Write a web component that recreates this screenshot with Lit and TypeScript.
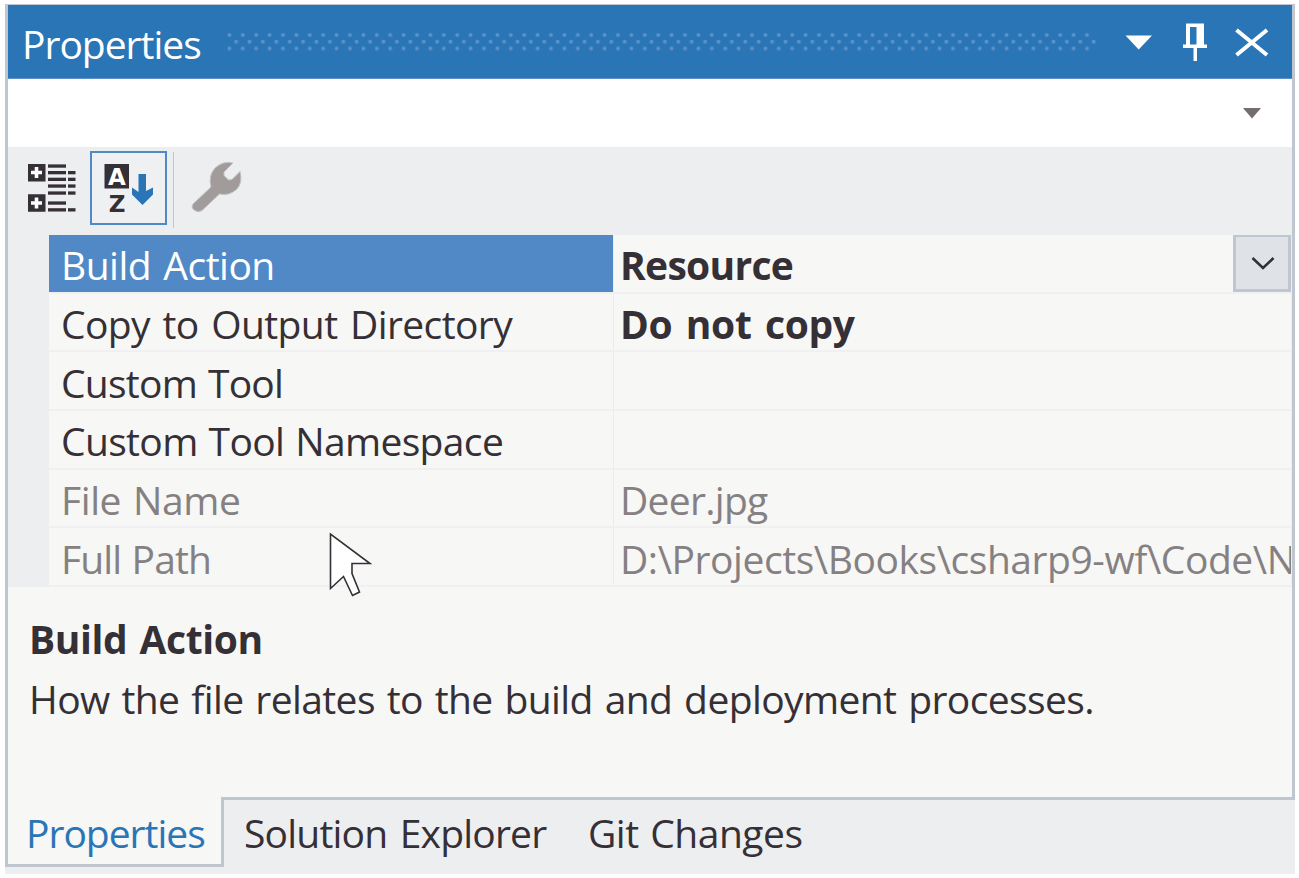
import { LitElement, html, css, svg } from "lit";
import { customElement, property, state } from "lit/decorators.js";
import { classMap } from "lit/directives/class-map.js";

interface Row {
  name: string;
  value: string;
  readonly?: boolean;
  /** letter and word spacing of the name, in px */
  fit: [number, number];
  /** letter and word spacing of the value, in px */
  valueFit?: [number, number];
}

const ROWS: Row[] = [
  { name: "Build Action", value: "Resource", fit: [-0.5, 2.5], valueFit: [-0.7, 0] },
  { name: "Copy to Output Directory", value: "Do not copy", fit: [-0.6, 3], valueFit: [-0.3, 3.5] },
  { name: "Custom Tool", value: "", fit: [-0.75, 1.5] },
  { name: "Custom Tool Namespace", value: "", fit: [-0.65, 1.5] },
  { name: "File Name", value: "Deer.jpg", readonly: true, fit: [-0.4, 2.2], valueFit: [-0.7, 0] },
  {
    name: "Full Path",
    value: "D:\\Projects\\Books\\csharp9-wf\\Code\\N",
    readonly: true,
    fit: [-0.9, 1.2],
    valueFit: [-0.44, 0],
  },
];

const spacing = ([l, w]: [number, number] = [0, 0]) => `letter-spacing:${l}px;word-spacing:${w}px`;

@customElement("title-bar")
export class TitleBar extends LitElement {
  @property() label = "";

  static styles = css`
    :host {
      display: flex;
      align-items: center;
      height: 73px;
      flex: none;
      background: #2975b6;
      border-bottom: 1px solid #5b90c8;
      color: #fff;
      padding: 0 22px 0 14px;
    }
    .label {
      width: 205px;
      flex: none;
      white-space: nowrap;
      line-height: 54px;
      margin-top: 5px;
      letter-spacing: -1px;
    }
    .grip {
      width: 870px;
      height: 18px;
      flex: none;
      margin-top: 1px;
    }
    .buttons {
      margin-left: auto;
      width: 146px;
      height: 40px;
      flex: none;
    }
  `;

  render() {
    return html`
      <span class="label">${this.label}</span>
      <svg class="grip" viewBox="0 0 870 18">
        <defs>
          <pattern id="dots" width="13.4" height="14" patternUnits="userSpaceOnUse">
            <circle cx="2.4" cy="2" r="2" fill="#5b90c8" />
            <circle cx="9.1" cy="8.8" r="2" fill="#5b90c8" />
          </pattern>
          <pattern id="tail" width="13.4" height="4" patternUnits="userSpaceOnUse" y="13.5">
            <circle cx="2.4" cy="2" r="2" fill="#5b90c8" />
          </pattern>
        </defs>
        <rect width="870" height="13" fill="url(#dots)" />
        <rect y="13.5" width="870" height="4" fill="url(#tail)" />
      </svg>
      <svg class="buttons" viewBox="0 0 146 40" fill="#fff">
        <path d="M1.500 13.500H28L14.700 27.500Z" />
        <path
          d="M62 1.500H80V22.500H83V26H73V39H69.500V26H59V22.500H62ZM66 5V22.500H72.500V5Z"
          fill-rule="evenodd" />
        <path d="M112.500 8L143 33M143 8L112.500 33" stroke="#fff" stroke-width="4" />
      </svg>
    `;
  }
}

@customElement("tool-strip")
export class ToolStrip extends LitElement {
  static styles = css`
    :host {
      display: flex;
      flex: none;
      height: 88px;
      box-sizing: border-box;
      padding-top: 4px;
      padding-left: 3px;
      background: #edeef0;
    }
    .tool {
      box-sizing: border-box;
      height: 74px;
      width: 79px;
    }
    .tool.sorted {
      width: 77px;
      border: 2px solid #4f8ac6;
      background: #eff0f2;
    }
    .rule {
      width: 1px;
      height: 76px;
      margin: 1px 0 0 6px;
      background: #c0c6d0;
    }
    .tool svg {
      display: block;
      width: 100%;
      height: 100%;
    }
    .glyph {
      font: bold 23px "DejaVu Sans", Verdana, sans-serif;
    }
  `;

  render() {
    const lines: number[][] = [
      [37, 14, 18], [37, 20.6, 18], [37, 27.3, 18], [37, 34, 18], [37, 41, 18], [37, 51, 18], [37, 57.8, 18],
      [57, 20.6, 7.5], [57, 27.3, 7.5], [57, 34, 7.5], [57, 41, 7.5], [57, 57.8, 7.5],
    ];
    return html`
      <div class="tool">
        <svg viewBox="0 0 79 74">
          <path d="M17 13h17.500v17.500H17ZM17 43.300h17.500v17.500H17Z" fill="#352f36" />
          <path d="M20 21.500h11M25.500 16v11M20 52h11M25.500 46.500v11" stroke="#fff" stroke-width="3.600" />
          ${lines.map(([x, y, w]) => svg`<rect x=${x} y=${y - 0.6} width=${w} height="3.300" fill="#352f36" />`)}
        </svg>
      </div>
      <div class="tool sorted">
        <svg viewBox="0 0 73 70">
          <rect x="12.500" y="11" width="24.500" height="24.500" fill="#352f36" />
          <text class="glyph" x="15.900" y="31.500" fill="#fff">A</text>
          <text class="glyph" x="16.700" y="58.500" fill="#352f36">Z</text>
          <path d="M46.500 21H54V38L61 34.500V41.500L50.500 52L40 41.500V34.500L46.500 39Z" fill="#2975b6" />
        </svg>
      </div>
      <div class="rule"></div>
      <div class="tool">
        <svg viewBox="0 0 79 74">
          <path
            d="M19 53L37 36Q34 25 41 17Q49 9.500 59 12L50 21V24.500L54.500 29L58 28.500L66 20.500Q69 32 62.500 38.500Q55 45 45.500 43L28 59.500Q24 62 21 59.500Q16.500 57 19 53Z"
            fill="#a19b9b" stroke="#c3c2c6" stroke-width="1" />
        </svg>
      </div>
    `;
  }
}

@customElement("property-grid")
export class PropertyGrid extends LitElement {
  @property({ attribute: false }) rows: Row[] = [];
  @property({ type: Number }) selected = 0;

  static styles = css`
    :host {
      display: grid;
      grid-template-rows: repeat(6, 1fr);
      height: 352px;
      flex: none;
      margin-left: 41px;
      margin-right: 1px;
    }
    .row {
      display: grid;
      grid-template-columns: 565px 1fr;
      min-width: 0;
      min-height: 0;
      border-bottom: 2px solid #f0f0f3;
      box-sizing: border-box;
    }
    .name,
    .value {
      display: flex;
      align-items: center;
      min-width: 0;
      overflow: hidden;
      white-space: nowrap;
      line-height: 54px;
      padding-top: 4px;
    }
    .name {
      padding-left: 12px;
      border-right: 1px solid #ececf0;
    }
    .value {
      padding-left: 6px;
      font-weight: bold;
    }
    .readonly {
      color: #858082;
    }
    .readonly .value {
      font-weight: normal;
    }
    .selected .name {
      background: #5089c6;
      background-clip: padding-box;
      color: #fff;
    }
    .drop {
      box-sizing: border-box;
      width: 58px;
      height: 58px;
      margin: -4px 0 0 auto;
      border: 3px solid #c0c6d0;
      background: #dfe2e7;
      flex: none;
    }
  `;

  render() {
    return this.rows.map(
      (r, i) => html`
        <div class=${classMap({ row: true, readonly: !!r.readonly, selected: i === this.selected })}>
          <div class="name"><span style=${spacing(r.fit)}>${r.name}</span></div>
          <div class="value">
            <span style=${spacing(r.valueFit)}>${r.value}</span>
            ${i === this.selected
              ? html`<svg class="drop" viewBox="0 0 52 52">
                  <path d="M16.500 21L27 31L37.500 21" fill="none" stroke="#352f36" stroke-width="2.600" />
                </svg>`
              : ""}
          </div>
        </div>
      `
    );
  }
}

@customElement("app-root")
export class AppRoot extends LitElement {
  @state() private selected = 0;

  static styles = css`
    :host {
      display: block;
      position: relative;
      width: 1299px;
      height: 878px;
      box-sizing: border-box;
      padding: 4px 4px 4px 5px;
      background: #fff;
      color: #352f36;
      font: 39px "Open Sans", "Noto Sans", sans-serif;
      overflow: hidden;
    }
    .window {
      display: flex;
      flex-direction: column;
      height: 793px;
      box-sizing: border-box;
      border: 3px solid #c0c6d0;
      border-top-width: 1px;
      border-bottom: none;
      background: #edeef0;
    }
    .combo {
      flex: none;
      height: 68px;
      background: #fff;
      display: flex;
      justify-content: flex-end;
      align-items: center;
      padding-right: 31px;
    }
    .description {
      flex: 1;
      background: #f7f7f5;
      padding: 25px 21px 0;
    }
    .heading,
    .text {
      margin: 0;
      font-size: inherit;
      white-space: nowrap;
      line-height: 54px;
    }
    .heading {
      font-weight: bold;
      letter-spacing: -0.4px;
      word-spacing: 2.5px;
    }
    .text {
      margin-top: 6px;
      letter-spacing: -0.6px;
      word-spacing: 2.3px;
    }
    property-grid {
      background: #f7f7f5;
    }
    .tabs {
      display: flex;
      height: 77px;
      background: #edeef0;
    }
    .tab {
      box-sizing: border-box;
      flex: none;
      line-height: 54px;
      white-space: nowrap;
    }
    .tab.active {
      width: 216px;
      height: 70px;
      padding-top: 9px;
      padding-left: 18px;
      background: #f7f7f5;
      color: #2975b6;
      letter-spacing: -1px;
      border: 3px solid #c0c6d0;
      border-top: none;
      border-right: none;
    }
    .rest {
      flex: 1;
      display: flex;
      border-top: 3px solid #c0c6d0;
    }
    .edge {
      width: 3px;
      height: 67px;
      background: #c0c6d0;
    }
    .rest .tab {
      padding-top: 6px;
    }
    .second {
      width: 344px;
      padding-left: 20px;
      letter-spacing: -0.8px;
      word-spacing: 3px;
    }
    .third {
      padding-left: 20px;
      letter-spacing: -0.5px;
      word-spacing: 2px;
    }
    .cursor {
      position: absolute;
      left: 327px;
      top: 530px;
    }
  `;

  render() {
    return html`
      <div class="window">
        <title-bar label="Properties"></title-bar>
        <div class="combo">
          <svg width="18" height="11" viewBox="0 0 18 11"><path d="M0 0H18L9 10.500Z" fill="#736d70" /></svg>
        </div>
        <tool-strip></tool-strip>
        <property-grid .rows=${ROWS} .selected=${this.selected}></property-grid>
        <div class="description">
          <h2 class="heading">Build Action</h2>
          <p class="text">How the file relates to the build and deployment processes.</p>
        </div>
      </div>
      <div class="tabs">
        <div class="tab active">Properties</div>
        <div class="rest">
          <div class="edge"></div>
          <div class="tab second">Solution Explorer</div>
          <div class="tab third">Git Changes</div>
        </div>
      </div>
      <svg class="cursor" width="46" height="68" viewBox="0 0 46 68">
        <path
          d="M3.500 4V58.500L16.500 46.500L25.500 65.500L32.500 62L25 43.500V33.500H43Z"
          fill="#fff" stroke="#352f36" stroke-width="1.600" />
      </svg>
    `;
  }
}
